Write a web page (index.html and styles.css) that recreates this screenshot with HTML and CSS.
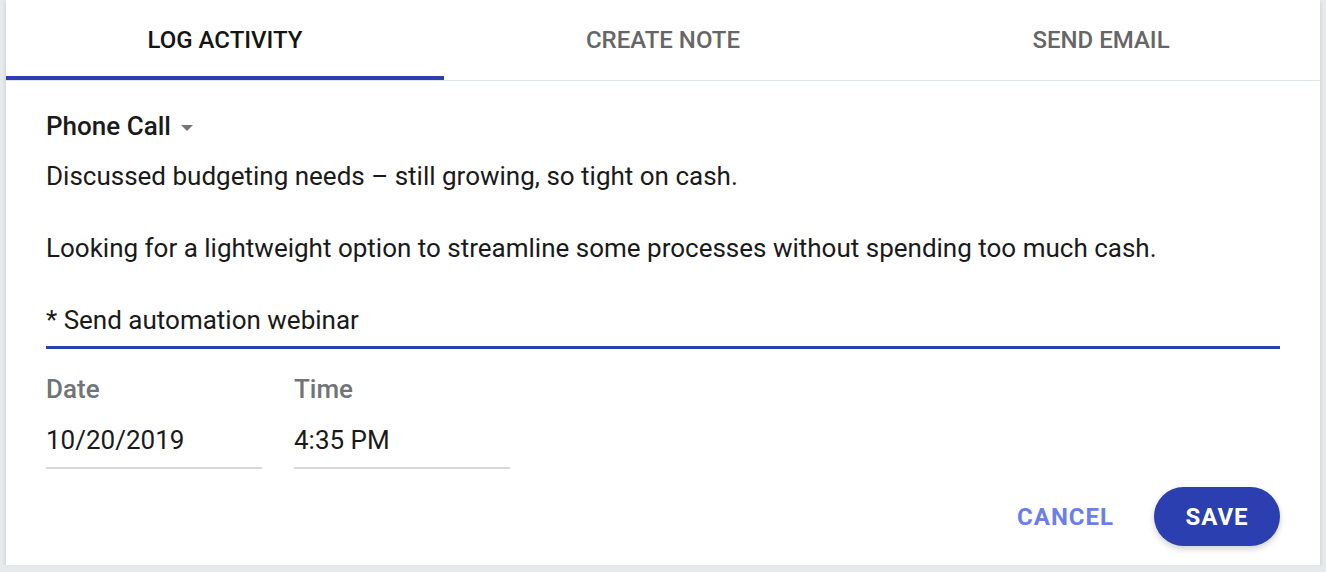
FILE: index.html
```html
<!DOCTYPE html>
<html>
<head>
    <title>Log Activity</title>
    <link rel="stylesheet" href="styles.css">
</head>
<body>
    <div class="card">
        <div class="tabs">
            <div class="tab active">Log Activity</div>
            <div class="tab">Create Note</div>
            <div class="tab">Send Email</div>
        </div>

        <div class="content">
            <div class="type-select">
                <span>Phone Call</span>
                <span class="caret"></span>
            </div>

            <div class="notes">
                <p>Discussed budgeting needs &ndash; still growing, so tight on cash.</p>
                <p class="blank"></p>
                <p>Looking for a lightweight option to streamline some processes without spending too much cash.</p>
                <p class="blank"></p>
                <p>* Send automation webinar</p>
            </div>

            <div class="fields">
                <div class="field">
                    <div class="label">Date</div>
                    <div class="value">10/20/2019</div>
                </div>
                <div class="field">
                    <div class="label">Time</div>
                    <div class="value">4:35 PM</div>
                </div>
            </div>

            <div class="actions">
                <button class="btn-text">Cancel</button>
                <button class="btn-primary">Save</button>
            </div>
        </div>
    </div>
</body>
</html>
```

FILE: styles.css
```css
body {
    margin: 0;
    background: #e6eaed;
    font-family: Roboto, "Liberation Sans", Arial, sans-serif;
    color: #1a1a1a;
}

.card {
    margin-left: 6px;
    width: 1314px;
    height: 565px;
    background: #fff;
    box-shadow: 0 1px 4px rgba(0, 0, 0, 0.15);
}

/* Tabs */
.tabs {
    display: grid;
    grid-template-columns: repeat(3, 1fr);
    border-bottom: 1px solid #dfe4e8;
}

.tab {
    height: 80px;
    box-sizing: border-box;
    padding-top: 4px;
    border-bottom: 4px solid transparent;
    display: flex;
    align-items: center;
    justify-content: center;
    font-size: 24px;
    font-weight: 500;
    text-transform: uppercase;
    color: #666;
}

.tab.active {
    color: #141414;
    border-bottom-color: #2b3fb1;
}

/* Form */
.content {
    padding: 27px 40px 0;
}

.type-select {
    display: flex;
    align-items: center;
    height: 36px;
    font-size: 26px;
    font-weight: 500;
}

.caret {
    margin-left: 10px;
    margin-top: 3px;
    border-left: 6px solid transparent;
    border-right: 6px solid transparent;
    border-top: 6px solid #757575;
}

.notes {
    margin-top: 14px;
    padding-bottom: 8px;
    border-bottom: 3px solid #2b3fb1;
    font-size: 26px;
}

.notes p {
    margin: 0;
    height: 36px;
    line-height: 36px;
}

.fields {
    display: flex;
    gap: 32px;
    margin-top: 22px;
}

.field {
    width: 216px;
}

.label {
    height: 36px;
    line-height: 36px;
    font-size: 26px;
    font-weight: 500;
    color: #707478;
}

.value {
    margin-top: 15px;
    height: 36px;
    line-height: 36px;
    font-size: 26px;
    padding-bottom: 9px;
    border-bottom: 2px solid #d9d9d9;
}

.actions {
    display: flex;
    justify-content: flex-end;
    align-items: center;
    gap: 40px;
    margin-top: 18px;
}

button {
    font-family: inherit;
    font-size: 24px;
    font-weight: 700;
    letter-spacing: 1px;
    text-transform: uppercase;
    border: none;
    cursor: pointer;
}

.btn-text {
    background: none;
    color: #6b7ee9;
    padding: 0;
}

.btn-primary {
    background: #2b3fb1;
    color: #fff;
    width: 126px;
    height: 59px;
    border-radius: 30px;
    box-shadow: 0 3px 6px rgba(0, 0, 0, 0.18);
}
```
